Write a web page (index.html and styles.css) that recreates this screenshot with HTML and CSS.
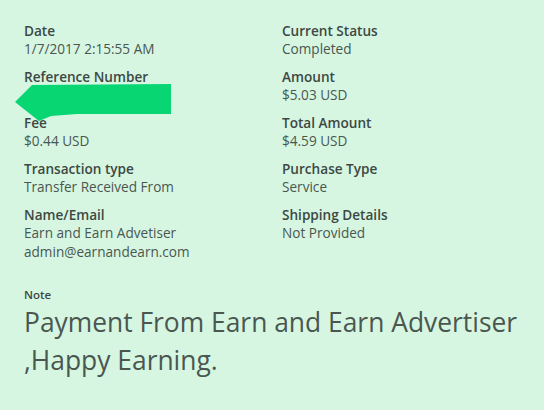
FILE: index.html
```html
<!DOCTYPE html>
<html lang="en">
<head>
    <meta charset="UTF-8">
    <meta name="viewport" content="width=device-width, initial-scale=1.0">
    <title>Transaction Details</title>
    <link rel="stylesheet" href="styles.css">
</head>
<body>
    <div class="details">
        <div class="grid">
            <div class="field">
                <div class="label">Date</div>
                <div class="value">1/7/2017 2:15:55 AM</div>
            </div>
            <div class="field">
                <div class="label">Current Status</div>
                <div class="value">Completed</div>
            </div>
            <div class="field">
                <div class="label">Reference Number</div>
                <div class="value">&nbsp;</div>
                <svg class="arrow" width="160" height="40" viewBox="0 0 160 40">
                    <polygon points="0,19 17,2 156,1 156,31 62,31 36,33 24,38 0,19" fill="#07d673"/>
                </svg>
            </div>
            <div class="field">
                <div class="label">Amount</div>
                <div class="value">$5.03 USD</div>
            </div>
            <div class="field">
                <div class="label">Fee</div>
                <div class="value">$0.44 USD</div>
            </div>
            <div class="field">
                <div class="label">Total Amount</div>
                <div class="value">$4.59 USD</div>
            </div>
            <div class="field">
                <div class="label">Transaction type</div>
                <div class="value">Transfer Received From</div>
            </div>
            <div class="field">
                <div class="label">Purchase Type</div>
                <div class="value">Service</div>
            </div>
            <div class="field">
                <div class="label">Name/Email</div>
                <div class="value">Earn and Earn Advetiser</div>
                <div class="value">admin@earnandearn.com</div>
            </div>
            <div class="field">
                <div class="label">Shipping Details</div>
                <div class="value">Not Provided</div>
            </div>
        </div>

        <div class="note">
            <div class="note-label">Note</div>
            <div class="note-text">Payment From Earn and Earn Advertiser ,Happy Earning.</div>
        </div>
    </div>
</body>
</html>
```

FILE: styles.css
```css
html, body{
    margin: 0;
    padding: 0;
}
body{
    background: #d6f6e2;
    font-family: "Open Sans", "Noto Sans", sans-serif;
    color: #4a5650;
    width: 544px;
    height: 410px;
    overflow: hidden;
}
.details{
    padding: 22px 24px 0 24px;
}
.grid{
    display: grid;
    grid-template-columns: 258px 1fr;
    row-gap: 9.5px;
}
.field{
    position: relative;
}
.label{
    font-size: 13.6px;
    font-weight: 600;
    line-height: 18px;
    color: #3d4843;
}
.value{
    font-size: 13.6px;
    line-height: 18.5px;
}
.arrow{
    position: absolute;
    left: -9px;
    top: 15px;
}
.note{
    margin-top: 26px;
}
.note-label{
    font-size: 11.5px;
    font-weight: 600;
    line-height: 16px;
    color: #3d4843;
}
.note-text{
    font-size: 26.4px;
    line-height: 38px;
    width: 510px;
}
```
